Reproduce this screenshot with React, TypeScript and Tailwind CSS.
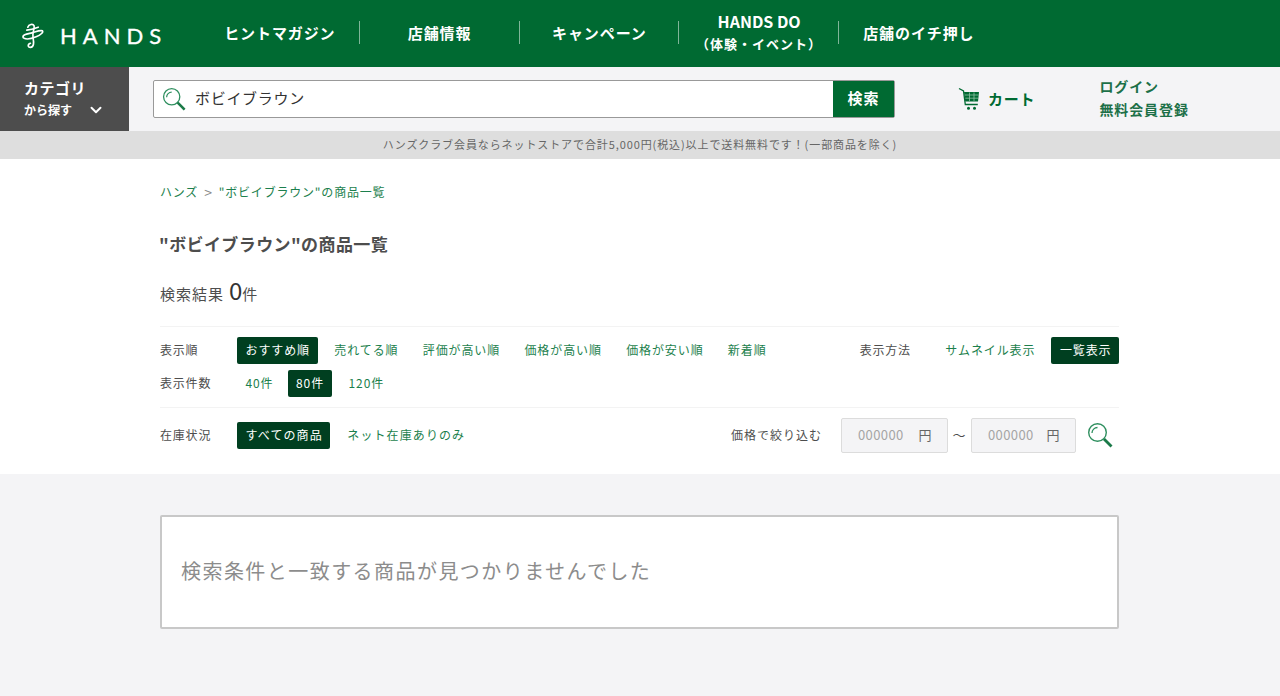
import { ChevronDown } from 'lucide-react'

const jp = '[font-family:"Noto_Sans_CJK_JP","Noto_Sans",sans-serif]'

function Lens({ size = 26 }: { size?: number }) {
  return (
    <svg width={size} height={size} viewBox="0 0 26 26" fill="none" stroke="#2f8f5f">
      <circle cx="10.5" cy="10.5" r="8.8" strokeWidth="1.4" />
      <path d="M5 11a5.5 5.5 0 0 1 5.5-5.5" strokeWidth="1.3" />
      <path d="M17 17l7.5 7.5" strokeWidth="2.8" stroke="#1b7a48" />
    </svg>
  )
}

function Cart() {
  return (
    <svg width="22" height="24" viewBox="8 5 22 24" fill="none" stroke="#006a32">
      <path d="M9 6.5l4.5 2.5 1.8 13.5h12.5" strokeWidth="1.3" />
      <path d="M14 10h15l-1 9.5H15.2z" fill="#006a32" stroke="none" />
      <path d="M15 13h13.5M15.3 16.2h12.8M19.5 10.5v8.5M24 10.5v8.5" strokeWidth="0.8" stroke="#8fc1a5" />
      <circle cx="18.5" cy="26.2" r="1.5" fill="#006a32" stroke="none" />
      <circle cx="24.5" cy="26.2" r="1.5" fill="#006a32" stroke="none" />
    </svg>
  )
}

function NavItem({ children, last }: { children: React.ReactNode; last?: boolean }) {
  return (
    <div className="w-[159.75px] h-[23px] flex items-center justify-center relative">
      <div className="text-center text-white text-[15px] font-bold leading-[22px] tracking-[0.9px] whitespace-nowrap">{children}</div>
      {!last && <span className="absolute right-0 top-0 w-px h-[23px] bg-white/50" />}
    </div>
  )
}

function Opt({ on, wide, className = '', children }: { on?: boolean; wide?: boolean; className?: string; children: React.ReactNode }) {
  const spacing = wide ? 'tracking-[1.1px]' : 'tracking-[0.9px]'
  if (on) {
    return <span className={`inline-flex items-center h-[27px] pb-[2px] pl-[8.5px] pr-[7.5px] rounded-[2px] bg-[#003f20] text-white text-[12px] ${spacing} whitespace-nowrap ${className}`}>{children}</span>
  }
  return <span className={`inline-flex items-center h-[27px] pb-[2px] px-[8.5px] text-[#1c7f4d] text-[12px] ${spacing} whitespace-nowrap ${className}`}>{children}</span>
}

function PriceBox({ w }: { w: string }) {
  return (
    <div className={`${w} h-[35px] pb-[2px] flex items-center justify-between pl-[16px] pr-[15px] bg-[#f4f4f6] border border-[#dcdcdc] rounded-[2px] text-[#a5a5a5] text-[13px] tracking-[0.4px]`}>
      <span>000000</span>
      <span className="text-[#666]">円</span>
    </div>
  )
}

export default function App() {
  return (
    <div className={`${jp} min-h-[696px] bg-[#f4f4f6] text-[#4d4d4d]`}>
      <header className="h-[67px] bg-[#006a32] flex items-center">
        <div className="w-[200px] pl-[21px] pt-[5px] flex items-center gap-[15px] text-white">
          <svg width="24" height="28" viewBox="6 8 22 27" fill="none" stroke="#fff" strokeWidth="1.6" strokeLinecap="round">
            <path d="M12 13C13 10 17 9.5 18 11.5C19 14 16 18 17 23C18 28 18 32 14.5 32.5C12 32.5 11.5 29.5 14.5 28.5" />
            <path d="M11 15.8C15 15.5 18 14.5 22 13" />
            <path d="M7.5 23C6.5 20 12 19.5 16 18.5C19 17.7 24 15.5 26 16.5C27.5 17.5 24.5 20.5 20 22.3C17 23.5 12 25.5 8.5 23.7" />
          </svg>
          <span className='[font-family:"Lato",sans-serif] [-webkit-text-stroke:0.35px_white] text-[22px] tracking-[6px] leading-none'>HANDS</span>
        </div>
        <nav className="flex items-center pb-[2px]">
          <NavItem>ヒントマガジン</NavItem>
          <NavItem>店舗情報</NavItem>
          <NavItem>キャンペーン</NavItem>
          <NavItem>
            <span className="block text-[16px] tracking-normal leading-[20px] mb-[2px]">HANDS DO</span>
            <span className="block text-[13px] tracking-[1px]">（体験・イベント）</span>
          </NavItem>
          <NavItem last>店舗のイチ押し</NavItem>
        </nav>
      </header>

      <div className="h-[64px] flex items-center">
        <div className="w-[129px] h-full bg-[#4d4d4d] text-white pl-[24px] pt-[10px] font-bold">
          <div className="text-[15px] leading-[22px] tracking-[0.5px]">カテゴリ</div>
          <div className="flex items-center text-[12px] leading-[20px] pt-[1px]">
            <span>から探す</span>
            <ChevronDown size={18} strokeWidth={2.6} className="ml-[15px]" />
          </div>
        </div>
        <div className="ml-[24px] w-[742px] h-[38px] flex border border-[#999] rounded-[2px] bg-white">
          <div className="flex-1 flex items-center pl-[8px]">
            <Lens size={24} />
            <span className="ml-[9px] pb-[2px] text-[15px] tracking-[0.7px] text-[#333]">ボビイブラウン</span>
          </div>
          <div className="w-[61px] pb-[2px] bg-[#006a32] text-white text-[15px] tracking-[1px] font-bold flex items-center justify-center">検索</div>
        </div>
        <div className="ml-[63px] flex items-center gap-[8px] text-[#006a32] text-[15px] font-bold tracking-[0.8px]">
          <Cart />
          <span>カート</span>
        </div>
        <div className="ml-[64px] mb-[2px] text-[#1c7048] text-[14px] font-bold leading-[23px] tracking-[0.9px]">
          <div>ログイン</div>
          <div>無料会員登録</div>
        </div>
      </div>

      <div className="h-[28px] pb-[1px] bg-[#dedede] flex items-center justify-center text-[11px] tracking-[0.9px] text-[#666]">
        ハンズクラブ会員ならネットストアで合計5,000円(税込)以上で送料無料です！(一部商品を除く)
      </div>

      <main className="bg-white h-[315px] pt-[24px] pl-[160px] pr-[161px]">
        <div className="h-[18px] text-[12px] leading-[18px] tracking-[0.8px] text-[#1c7f4d] flex items-center">
          <span>ハンズ</span>
          <span className="text-[#888] text-[14px] leading-[18px] mx-[6px]">&gt;</span>
          <span>"ボビイブラウン"の商品一覧</span>
        </div>
        <h1 className="mt-[30px] -ml-[1px] text-[17px] leading-[26px] font-bold tracking-[0.4px] text-[#4d4d4d]">"ボビイブラウン"の商品一覧</h1>
        <div className="mt-[15px] h-[32px] flex items-baseline text-[15px] tracking-[1px]">
          <span>検索結果</span>
          <span className="ml-[5px] text-[24px] text-[#333] tracking-normal">0</span>
          <span>件</span>
        </div>
        <div className="mt-[22px] pt-[10px] pb-[10px] border-y border-[#f3f3f3]">
          <div className="flex items-center h-[27px] text-[12px] tracking-[0.8px]">
            <span className="w-[77px] pb-[2px]">表示順</span>
            <div className="flex items-center gap-[7.3px]">
              <Opt on className="mr-[1px]">おすすめ順</Opt>
              <Opt>売れてる順</Opt>
              <Opt>評価が高い順</Opt>
              <Opt>価格が高い順</Opt>
              <Opt>価格が安い順</Opt>
              <Opt>新着順</Opt>
            </div>
            <span className="ml-auto pb-[2px]">表示方法</span>
            <div className="ml-[26px] flex items-center gap-[7.5px]">
              <Opt>サムネイル表示</Opt>
              <Opt on>一覧表示</Opt>
            </div>
          </div>
          <div className="mt-[6px] flex items-center h-[27px] text-[12px] tracking-[0.8px]">
            <span className="w-[77px] pb-[2px] whitespace-nowrap">表示件数</span>
            <div className="flex items-center gap-[6.5px]">
              <Opt className="-mr-[1px]">40件</Opt>
              <Opt on className="mr-[2px]">80件</Opt>
              <Opt>120件</Opt>
            </div>
          </div>
        </div>
        <div className="mt-[10px] flex items-center h-[35px] text-[12px] tracking-[0.8px]">
          <span className="w-[77px] pb-[2px]">在庫状況</span>
          <div className="flex items-center gap-[7.5px]">
            <Opt on wide className="mr-[1px]">すべての商品</Opt>
            <Opt wide>ネット在庫ありのみ</Opt>
          </div>
          <span className="ml-auto pb-[2px] tracking-[1px]">価格で絞り込む</span>
          <div className="ml-[19px] flex items-center">
            <PriceBox w="w-[107px]" />
            <span className="w-[23px] pb-[2px] text-center text-[13px]">〜</span>
            <PriceBox w="w-[105px]" />
            <div className="ml-[11px] mr-[6px] mb-[2px]"><Lens /></div>
          </div>
        </div>
      </main>

      <div className="pt-[41px] pl-[160px] pr-[161px]">
        <div className="h-[114px] bg-white border-2 border-[#c8c8c8] rounded-[2px] flex items-center pl-[19px] pb-[2px] text-[20px] tracking-[1.45px] text-[#8c8c8c]">
          検索条件と一致する商品が見つかりませんでした
        </div>
      </div>
    </div>
  )
}
